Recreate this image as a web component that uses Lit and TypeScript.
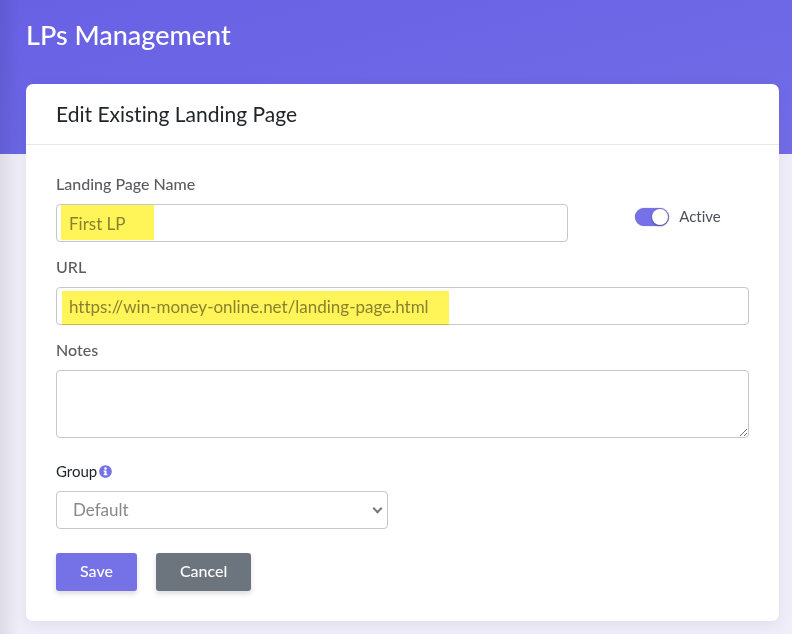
import { LitElement, html, css, svg } from "lit";
import { customElement, state } from "lit/decorators.js";

const infoIcon = svg`<svg class="info" viewBox="0 0 512 512" role="img" aria-label="Group information">
  <path fill="currentColor" d="M256 8C119 8 8 119 8 256s111 248 248 248 248-111 248-248S393 8 256 8zm0 80c28 0 50 22 50 50s-22 50-50 50-50-22-50-50 22-50 50-50zm72 304c0 7-5 12-12 12H196c-7 0-12-5-12-12v-40c0-7 5-12 12-12h20v-64h-20c-7 0-12-5-12-12v-40c0-7 5-12 12-12h88c7 0 12 5 12 12v116h20c7 0 12 5 12 12v40z"/>
</svg>`;

@customElement("app-root")
export class AppRoot extends LitElement {
  @state() private active = true;

  static styles = css`
    :host {
      display: block;
      min-height: 100vh;
      background: #f0eef9;
      color: #212529;
      font-family: Lato, "Noto Sans", sans-serif;
      font-size: 16px;
      line-height: 18px;
      font-variant-ligatures: none;
    }
    * {
      box-sizing: border-box;
    }
    .page {
      position: relative;
      min-height: 100vh;
      padding: 20px 13px 13px 26px;
      background: linear-gradient(165deg, #6861e4, #726ce7) 0 0 / 100% 154px no-repeat;
    }
    .page::before {
      content: "";
      position: absolute;
      inset: 0 auto 0 0;
      width: 20px;
      background: linear-gradient(90deg, rgba(0, 0, 0, 0.08), rgba(0, 0, 0, 0));
      pointer-events: none;
    }
    h1 {
      margin: 0 0 34px;
      color: #fff;
      font-size: 27px;
      line-height: 30px;
      font-weight: 500;
    }
    .card {
      background: #fff;
      border-radius: 7px;
      box-shadow: 0 5px 15px rgba(69, 65, 78, 0.08);
    }
    .card-head {
      padding: 15px 30px;
      border-bottom: 1px solid #e6eaea;
    }
    h2 {
      margin: 0;
      font-size: 21px;
      line-height: 30px;
      font-weight: 400;
    }
    form {
      padding: 30px;
    }
    .row {
      display: flex;
      margin: 0 -15px;
    }
    .col {
      padding: 0 15px;
    }
    .wide {
      width: 75%;
    }
    .half {
      width: 50%;
    }
    .field {
      margin-bottom: 16px;
    }
    .loose {
      margin-bottom: 24px;
    }
    label {
      color: #5d5b60;
      font-weight: 500;
    }
    .field > label {
      display: block;
      margin-bottom: 11px;
    }
    .field > .strong {
      display: flex;
      align-items: center;
      gap: 2px;
      color: #212529;
      font-size: 15px;
      font-weight: 400;
    }
    .control {
      position: relative;
    }
    input[type="text"],
    textarea,
    select {
      display: block;
      width: 100%;
      height: 38px;
      margin: 0;
      padding: 0 12px;
      border: 1px solid #c4c8c8;
      border-radius: 4px;
      background: #fff;
      color: #8a8787;
      font: inherit;
      font-size: 17px;
    }
    textarea {
      height: 68px;
      padding: 8px 12px;
      resize: vertical;
    }
    .mark {
      position: absolute;
      left: 5px;
      top: 1px;
      bottom: 2px;
      background: #fff458;
      mix-blend-mode: multiply;
      pointer-events: none;
    }
    .mark-name {
      width: 93px;
    }
    .mark-url {
      left: 6px;
      width: 387px;
      top: 4px;
      bottom: 0;
    }
    .switch {
      display: flex;
      align-items: center;
      gap: 10px;
      width: 25%;
      margin-bottom: 16px;
      padding: 16px 0 0 52px;
    }
    .switch label {
      padding-bottom: 2px;
      color: #495057;
      font-size: 15px;
      font-weight: 400;
    }
    .switch input {
      appearance: none;
      width: 34px;
      height: 18px;
      margin: 0;
      padding: 1px;
      border-radius: 9px;
      background: #c4c8c8;
      box-shadow: 0 0 1px #777;
    }
    .switch input::before {
      content: "";
      display: block;
      width: 16px;
      height: 16px;
      border-radius: 50%;
      background: #fff;
      box-shadow: 0 1px 2px rgba(0, 0, 0, 0.4);
    }
    .switch input:checked {
      background: #7571e6;
    }
    .switch input:checked::before {
      margin-left: auto;
    }
    .info {
      width: 13px;
      height: 13px;
      color: #7571e6;
    }
    .select::after {
      content: "";
      position: absolute;
      right: 7px;
      top: 14px;
      width: 5px;
      height: 5px;
      border: solid #777;
      border-width: 0 2px 2px 0;
      transform: rotate(45deg);
      pointer-events: none;
    }
    select {
      appearance: none;
      padding: 0 16px;
    }
    .actions {
      display: flex;
      gap: 19px;
    }
    button {
      height: 38px;
      padding: 0 24px 2px;
      border: 0;
      border-radius: 3px;
      background: #7571e6;
      color: #fff;
      font: inherit;
      font-weight: 500;
      box-shadow: 0 3px 5px rgba(69, 65, 78, 0.18);
    }
    .cancel {
      background: #6c757d;
    }
  `;

  render() {
    return html`
      <main class="page">
        <h1>LPs Management</h1>
        <section class="card">
          <header class="card-head"><h2>Edit Existing Landing Page</h2></header>
          <form @submit=${(e: Event) => e.preventDefault()}>
            <div class="row">
              <div class="col wide field">
                <label for="name">Landing Page Name</label>
                <div class="control">
                  <input id="name" type="text" value="First LP" />
                  <span class="mark mark-name"></span>
                </div>
              </div>
              <div class="switch">
                <input
                  id="active"
                  type="checkbox"
                  role="switch"
                  .checked=${this.active}
                  @change=${() => (this.active = !this.active)}
                />
                <label for="active">Active</label>
              </div>
            </div>
            <div class="field">
              <label for="url">URL</label>
              <div class="control">
                <input id="url" type="text" value="https://win-money-online.net/landing-page.html" />
                <span class="mark mark-url"></span>
              </div>
            </div>
            <div class="field loose">
              <label for="notes">Notes</label>
              <textarea id="notes"></textarea>
            </div>
            <div class="row">
              <div class="col half field loose">
                <label class="strong" for="group">Group ${infoIcon}</label>
                <div class="control select">
                  <select id="group"><option>Default</option></select>
                </div>
              </div>
            </div>
            <div class="actions">
              <button type="submit">Save</button>
              <button type="button" class="cancel">Cancel</button>
            </div>
          </form>
        </section>
      </main>
    `;
  }
}
